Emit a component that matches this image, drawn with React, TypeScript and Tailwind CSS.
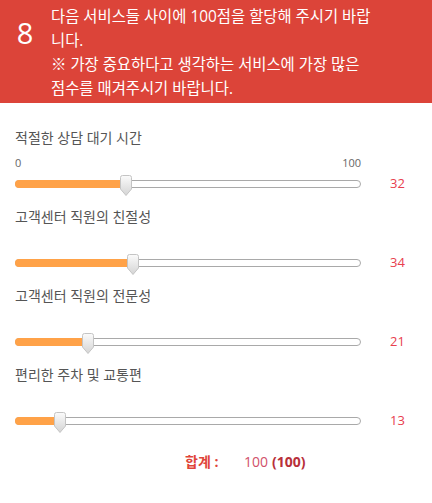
const items = [
  { label: "적절한 상담 대기 시간", value: 32, scale: true },
  { label: "고객센터 직원의 친절성", value: 34, scale: false },
  { label: "고객센터 직원의 전문성", value: 21, scale: false },
  { label: "편리한 주차 및 교통편", value: 13, scale: false },
];

const TRACK = 346;

function Handle() {
  return (
    <svg width="12" height="21" viewBox="0 0 12 21">
      <defs>
        <linearGradient id="hg" x1="0" y1="0" x2="0" y2="1">
          <stop offset="0" stopColor="#fbfbfb" />
          <stop offset="1" stopColor="#d4d4d4" />
        </linearGradient>
      </defs>
      <path d="M0.5 2.5 Q0.5 0.5 2.5 0.5 L9.5 0.5 Q11.5 0.5 11.5 2.5 L11.5 14 L6 20.5 L0.5 14 Z" fill="url(#hg)" stroke="#c4c4c4" />
    </svg>
  );
}

function Slider({ value }: { value: number }) {
  const pos = (value / 100) * TRACK;
  return (
    <div className="relative h-[8px] w-[346px] rounded-full border border-[#a9a9a9] bg-white">
      <div className="absolute -left-px -top-px h-[8px] rounded-l-full bg-[#ffa248]" style={{ width: pos + 1 }} />
      <div className="absolute -top-[6px]" style={{ left: pos - 7 }}>
        <Handle />
      </div>
    </div>
  );
}

export default function App() {
  return (
    <div className="w-[432px] h-[503px] bg-white font-['Open_Sans','Noto_Sans_CJK_KR',sans-serif]">
      {/* Header */}
      <div className="flex h-[103px] bg-[#dc4439] text-white">
        <div className="w-[50px] shrink-0 pt-[18px] text-center text-[29px] leading-none">8</div>
        <div className="pl-px pt-[5px] text-[15.4px] leading-[24px] whitespace-nowrap">
          다음 서비스들 사이에 100점을 할당해 주시기 바랍
          <br />
          니다.
          <br />
          ※ 가장 중요하다고 생각하는 서비스에 가장 많은
          <br />
          점수를 매겨주시기 바랍니다.
        </div>
      </div>

      {/* Sliders */}
      <div className="flex flex-col gap-[13px] pl-[15px] pt-[25px]">
        {items.map((it) => (
          <div key={it.label} className="flex flex-col">
            <div className="h-[20px] text-[14px] leading-[20px] text-[#555]">{it.label}</div>
            <div className={`mt-[8px] flex h-[14px] w-[346px] justify-between text-[11px] leading-[14px] text-[#666] ${it.scale ? "" : "invisible"}`}>
              <span>0</span>
              <span>100</span>
            </div>
            <div className="mt-[4px] flex h-[20px] items-center">
              <Slider value={it.value} />
              <span className="ml-[29px] text-[13px] text-[#e8404e]">{it.value}</span>
            </div>
          </div>
        ))}
      </div>

      {/* Total */}
      <div className="mt-[21px] flex h-[20px] items-center pl-[185px] text-[14px] leading-[20px]">
        <span className="w-[59px] font-bold text-[#e0453a]">합계 :</span>
        <span className="text-[#d1506a]">100</span>
        <span className="ml-[4px] font-bold text-[#b8303a]">(100)</span>
      </div>
    </div>
  );
}
